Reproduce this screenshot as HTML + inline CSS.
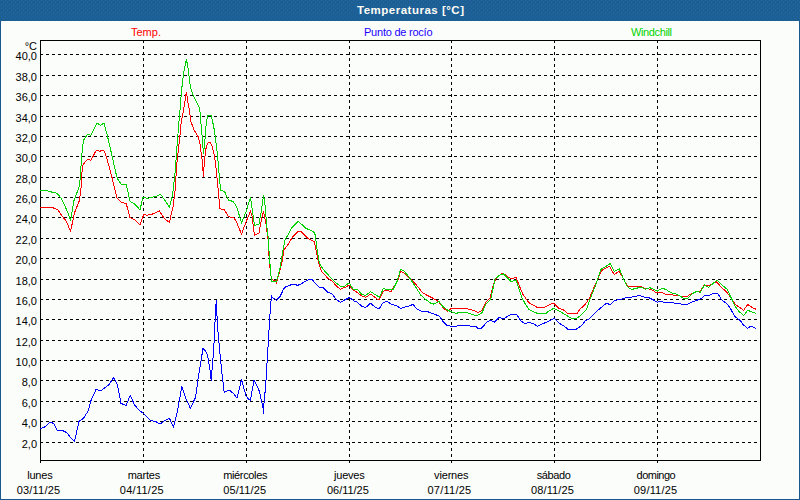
<!DOCTYPE html>
<html><head><meta charset="utf-8">
<style>
html,body{margin:0;padding:0;}
body{width:800px;height:500px;overflow:hidden;position:relative;background:#17598f;font-family:"Liberation Sans",sans-serif;font-size:11px;}
#title{position:absolute;left:0;top:0;width:800px;height:21px;background:#1c6093;}
#tt{position:absolute;left:357px;top:3px;line-height:14px;color:#fffdf5;font-weight:bold;font-size:11.5px;letter-spacing:0.5px;white-space:nowrap;}
#panel{position:absolute;left:1px;top:21px;width:798px;height:478px;background:#fbfdfa;}
svg{position:absolute;left:0;top:0;}
.g{stroke:#000;stroke-width:1;stroke-dasharray:3 3;}
.yl{position:absolute;left:0;width:37px;text-align:right;line-height:14px;color:#000;}
.xl{position:absolute;width:80px;text-align:center;line-height:14px;color:#000;}
.lg{position:absolute;top:25px;line-height:14px;white-space:nowrap;}
</style></head><body>
<div id="title"><svg width="800" height="21" style="position:absolute;left:0;top:0"><defs><pattern id="dith" width="4" height="4" patternUnits="userSpaceOnUse"><rect x="1" y="0" width="1" height="1" fill="#2765b0"/><rect x="3" y="2" width="1" height="1" fill="#2765b0"/></pattern></defs><rect width="800" height="20" fill="url(#dith)"/></svg></div><div id="tt">Temperaturas [°C]</div>
<div id="panel"></div>
<svg width="800" height="500" viewBox="0 0 800 500" shape-rendering="crispEdges">
<line x1="40" y1="54.5" x2="760" y2="54.5" class="g"/>
<line x1="40" y1="75.5" x2="760" y2="75.5" class="g"/>
<line x1="40" y1="95.5" x2="760" y2="95.5" class="g"/>
<line x1="40" y1="116.5" x2="760" y2="116.5" class="g"/>
<line x1="40" y1="136.5" x2="760" y2="136.5" class="g"/>
<line x1="40" y1="156.5" x2="760" y2="156.5" class="g"/>
<line x1="40" y1="177.5" x2="760" y2="177.5" class="g"/>
<line x1="40" y1="197.5" x2="760" y2="197.5" class="g"/>
<line x1="40" y1="217.5" x2="760" y2="217.5" class="g"/>
<line x1="40" y1="238.5" x2="760" y2="238.5" class="g"/>
<line x1="40" y1="258.5" x2="760" y2="258.5" class="g"/>
<line x1="40" y1="279.5" x2="760" y2="279.5" class="g"/>
<line x1="40" y1="299.5" x2="760" y2="299.5" class="g"/>
<line x1="40" y1="319.5" x2="760" y2="319.5" class="g"/>
<line x1="40" y1="340.5" x2="760" y2="340.5" class="g"/>
<line x1="40" y1="360.5" x2="760" y2="360.5" class="g"/>
<line x1="40" y1="380.5" x2="760" y2="380.5" class="g"/>
<line x1="40" y1="401.5" x2="760" y2="401.5" class="g"/>
<line x1="40" y1="421.5" x2="760" y2="421.5" class="g"/>
<line x1="40" y1="442.5" x2="760" y2="442.5" class="g"/>
<line x1="143.5" y1="40" x2="143.5" y2="460" class="g"/>
<line x1="246.5" y1="40" x2="246.5" y2="460" class="g"/>
<line x1="349.5" y1="40" x2="349.5" y2="460" class="g"/>
<line x1="451.5" y1="40" x2="451.5" y2="460" class="g"/>
<line x1="554.5" y1="40" x2="554.5" y2="460" class="g"/>
<line x1="657.5" y1="40" x2="657.5" y2="460" class="g"/>
<rect x="40.5" y="40.5" width="720" height="420" fill="none" stroke="#000" stroke-width="1"/>
<line x1="40.5" y1="460" x2="40.5" y2="463" stroke="#000"/>
<line x1="143.5" y1="460" x2="143.5" y2="463" stroke="#000"/>
<line x1="246.5" y1="460" x2="246.5" y2="463" stroke="#000"/>
<line x1="349.5" y1="460" x2="349.5" y2="463" stroke="#000"/>
<line x1="451.5" y1="460" x2="451.5" y2="463" stroke="#000"/>
<line x1="554.5" y1="460" x2="554.5" y2="463" stroke="#000"/>
<line x1="657.5" y1="460" x2="657.5" y2="463" stroke="#000"/>
<polyline points="40.00,207.25 51.25,207.25 57.50,209.40 61.90,215.60 66.25,221.25 70.60,231.25 74.40,213.10 79.40,200.60 81.25,185.60 82.00,172.00 83.10,164.40 86.90,160.00 88.75,159.40 90.60,160.60 92.50,157.50 96.25,150.25 99.40,151.25 103.75,150.25 106.25,156.25 110.60,172.00 112.50,179.40 116.90,198.10 121.25,202.25 126.25,203.75 130.00,217.50 135.00,220.00 140.00,225.00 143.75,214.40 147.50,215.25 152.50,214.00 159.40,211.00 163.75,217.50 166.25,220.00 169.40,222.25 173.10,206.25 175.60,186.25 176.25,170.00 178.10,151.75 179.75,138.00 181.25,121.75 183.30,112.00 184.80,102.00 186.40,92.10 187.90,102.00 189.70,112.00 190.60,120.50 193.75,129.25 198.10,136.75 200.00,144.25 201.90,158.00 203.50,177.00 204.40,160.50 206.25,146.75 208.10,142.40 210.60,143.00 211.90,145.50 214.40,155.50 216.25,170.00 220.00,208.75 224.40,209.75 228.75,216.90 233.75,217.50 236.00,221.00 241.50,234.00 246.00,222.00 250.50,211.00 252.00,216.00 254.50,235.50 259.00,233.00 261.50,219.00 263.50,211.00 266.00,224.00 268.00,239.00 269.50,264.00 271.00,276.00 272.50,280.00 275.50,280.50 276.50,282.50 279.50,272.00 282.00,262.00 284.00,250.00 285.00,248.60 288.50,243.70 292.70,236.70 298.30,231.10 301.10,231.80 307.40,238.10 314.40,241.60 316.50,252.80 318.60,262.60 321.40,271.00 324.00,274.00 328.00,278.50 332.00,281.00 336.00,285.50 340.50,289.50 343.00,287.80 345.50,287.20 349.00,285.00 353.00,290.00 356.00,291.50 361.60,296.00 365.80,297.20 370.60,294.20 374.80,297.20 379.00,300.20 383.20,291.20 386.80,290.60 391.00,291.50 394.00,286.40 397.60,281.00 400.60,271.40 403.60,272.60 410.80,279.20 416.00,284.40 422.00,292.20 426.80,295.20 432.80,298.20 438.80,301.80 443.60,308.40 447.80,311.40 451.40,308.40 456.80,308.20 466.40,308.40 472.40,310.20 478.20,312.30 481.70,310.50 485.90,302.10 490.10,297.90 492.90,286.00 496.40,277.60 502.70,273.10 506.20,275.50 511.10,279.00 516.00,277.30 518.80,284.60 523.00,294.40 528.60,302.50 534.00,305.60 537.90,307.70 543.70,307.50 548.90,304.90 553.50,303.20 558.70,308.40 563.20,309.70 567.80,313.60 576.90,313.60 580.10,309.00 584.70,305.10 589.20,298.60 595.20,284.90 601.10,271.30 604.30,268.70 609.50,266.10 614.10,274.50 619.30,271.30 623.80,279.70 627.70,286.20 640.70,286.50 644.60,288.50 648.00,288.50 652.00,290.00 657.00,293.00 661.00,292.20 666.00,294.50 673.00,295.00 678.00,295.50 682.50,296.50 687.50,296.20 691.00,293.80 696.00,291.80 700.00,291.50 704.00,285.50 709.20,285.30 716.40,281.70 721.60,287.60 726.10,291.50 731.30,298.00 735.20,304.50 739.10,307.10 743.70,310.30 747.60,304.50 751.50,307.10 756.00,309.30" fill="none" stroke="#ff0000" stroke-width="1"/>
<polyline points="40.00,428.70 44.50,427.20 49.75,422.20 53.50,423.30 57.25,430.20 62.50,430.50 67.00,432.70 70.75,438.00 74.50,441.30 79.00,421.50 83.50,418.20 88.00,411.30 91.00,400.50 96.20,389.20 100.00,391.20 103.00,389.20 109.00,384.70 113.50,377.70 117.20,384.00 121.00,403.50 126.20,405.30 130.25,395.25 134.50,405.00 140.00,411.00 142.90,413.00 150.80,420.80 155.10,421.20 160.20,424.10 164.50,420.50 169.50,418.40 173.40,427.00 176.70,414.80 181.80,386.70 186.10,398.90 190.40,408.30 194.75,398.90 195.60,397.30 198.20,377.90 200.80,362.30 203.00,348.20 206.70,352.50 208.60,361.00 210.60,374.00 211.20,380.50 211.90,371.40 213.20,355.80 214.20,340.20 215.60,308.70 216.40,299.80 217.40,326.00 219.50,347.60 220.30,357.70 222.30,376.60 224.20,392.10 229.40,390.20 234.00,394.00 237.00,398.00 241.50,379.50 246.00,396.00 248.50,399.00 250.50,400.00 254.00,380.00 259.50,391.50 263.00,408.00 263.50,413.50 264.50,393.00 265.50,392.00 266.00,380.00 270.60,304.20 271.60,296.20 273.20,298.20 274.80,298.60 276.40,300.40 280.00,296.60 281.60,293.40 283.60,289.00 285.60,287.00 288.80,285.80 291.60,284.40 295.20,284.40 297.20,285.40 300.00,284.50 304.00,282.00 309.00,279.50 312.50,280.00 316.00,284.00 319.50,287.50 323.50,287.80 327.50,292.00 332.00,294.00 336.00,299.00 340.50,302.50 344.50,300.00 349.50,297.50 354.00,301.00 357.00,301.80 361.60,306.20 365.80,307.40 370.60,303.20 374.80,306.80 379.00,309.20 382.60,303.20 386.80,301.40 391.60,304.20 396.40,305.60 400.60,308.60 403.60,307.40 408.40,306.20 413.20,304.40 416.00,308.20 421.40,311.40 428.00,311.80 433.40,313.80 439.40,316.20 443.00,321.60 447.20,325.80 454.40,326.40 458.60,325.80 466.40,325.80 476.00,326.40 478.20,328.70 481.70,328.00 487.30,321.70 490.80,320.30 494.30,322.40 499.20,317.50 503.40,318.90 511.10,314.30 516.70,314.30 520.90,321.00 525.10,323.80 528.60,322.40 534.00,323.80 537.20,326.20 542.40,324.00 548.90,321.00 554.10,318.40 559.30,323.30 563.90,325.90 567.80,329.20 576.20,329.20 581.40,325.90 585.30,320.70 589.20,318.80 596.50,311.60 602.40,306.40 606.90,303.10 610.20,305.10 614.70,300.50 621.20,299.20 627.10,297.30 633.60,296.90 639.40,295.30 644.60,297.30 648.00,297.20 653.00,299.80 657.50,302.20 660.00,301.50 664.50,302.20 672.00,302.50 675.00,303.20 682.00,304.20 687.00,304.50 692.00,302.00 696.00,300.50 701.00,298.80 704.50,295.50 709.20,295.40 713.10,293.40 717.70,293.40 721.60,299.90 726.80,303.80 730.00,307.70 734.60,316.20 740.40,320.70 743.00,324.60 747.60,328.30 750.80,326.20 756.00,328.50" fill="none" stroke="#0000ff" stroke-width="1"/>
<polyline points="40.00,190.25 46.25,190.60 52.50,192.25 56.90,193.10 60.60,197.50 65.00,206.25 68.10,213.10 70.60,220.60 73.75,201.25 77.50,191.25 79.75,184.40 80.25,176.25 80.60,172.00 82.50,146.25 83.75,140.00 86.90,135.00 88.75,134.40 90.60,135.60 92.50,132.50 96.90,123.10 100.60,125.25 104.00,123.10 107.50,136.25 111.25,152.50 115.60,172.00 117.50,178.75 121.25,184.40 126.25,184.40 130.00,201.25 135.00,204.40 140.00,209.75 143.10,196.90 147.50,198.50 151.25,197.25 156.25,196.50 160.60,194.10 165.00,200.60 169.40,207.25 172.75,193.75 173.75,183.75 175.40,170.00 176.50,151.75 177.50,140.50 178.50,126.75 179.75,113.60 180.80,99.00 182.30,83.50 184.20,69.80 186.40,58.90 188.25,69.80 190.40,87.20 193.20,95.80 199.65,108.20 201.25,126.75 202.50,140.50 203.50,154.25 205.00,139.25 206.25,123.00 207.50,115.75 211.25,115.75 213.75,126.75 215.60,139.25 217.50,155.50 218.75,170.00 220.60,190.60 224.40,191.25 228.75,200.60 233.10,201.25 236.25,206.25 238.00,211.00 241.50,223.00 246.00,212.00 250.50,197.00 252.00,208.00 254.50,225.50 259.00,224.00 261.50,210.00 263.50,195.00 265.00,205.00 267.00,228.00 268.50,240.00 269.00,251.00 270.00,264.00 271.50,282.00 276.00,281.50 277.50,278.00 280.00,268.00 282.00,256.00 283.50,247.00 285.00,240.20 292.00,227.60 298.30,221.30 306.00,228.30 313.70,231.80 315.10,234.60 317.20,250.00 319.30,262.60 322.80,268.90 329.80,276.60 334.00,281.00 338.00,284.50 340.50,286.20 344.50,286.50 349.00,282.80 353.00,289.00 357.50,289.50 361.60,294.20 365.80,295.40 370.60,291.50 375.40,294.80 379.60,297.20 383.20,288.60 386.80,289.40 389.80,289.40 392.80,290.00 397.00,281.60 400.60,269.40 403.60,270.60 408.40,276.20 416.00,287.40 420.80,295.20 425.60,299.40 430.40,303.00 434.00,304.20 438.80,301.40 442.40,306.00 446.60,309.60 449.00,310.80 456.20,313.40 460.40,312.20 466.40,312.60 473.60,315.00 478.20,315.10 481.70,313.30 485.90,304.20 490.80,299.30 495.00,279.00 499.20,275.50 503.40,273.70 507.60,277.90 511.10,281.50 516.00,280.10 521.60,297.20 525.80,304.90 529.30,309.80 534.00,311.90 537.90,313.60 545.70,313.60 548.90,311.00 553.50,308.40 559.30,311.00 565.80,314.90 571.00,318.10 576.20,318.80 581.40,314.90 586.60,309.70 590.00,299.20 595.20,286.20 601.10,269.30 605.60,266.70 610.20,263.50 614.10,271.30 619.30,268.70 623.80,279.70 627.70,286.90 631.60,289.50 636.80,288.20 640.70,287.20 645.30,289.10 650.00,287.80 657.50,291.00 662.00,288.20 666.00,289.50 670.50,292.50 676.00,294.00 680.00,296.00 684.00,298.50 687.50,298.50 692.00,293.80 697.00,291.20 700.00,292.50 704.50,285.00 708.60,287.20 717.00,280.10 722.20,285.30 726.80,288.90 731.30,298.00 735.20,306.40 739.10,311.60 743.70,315.50 747.60,310.30 752.10,311.90 756.00,313.60" fill="none" stroke="#00d200" stroke-width="1"/>
</svg>
<div class="lg" style="left:131px;color:#ff0000">Temp.</div>
<div class="lg" style="left:364px;color:#1a00ff;letter-spacing:-0.23px">Punto de rocío</div>
<div class="lg" style="left:631px;color:#00d200;letter-spacing:-0.37px">Windchill</div>
<div class="yl" style="top:39px">°C</div>
<div class="yl" style="top:49px">40,0</div>
<div class="yl" style="top:70px">38,0</div>
<div class="yl" style="top:90px">36,0</div>
<div class="yl" style="top:111px">34,0</div>
<div class="yl" style="top:131px">32,0</div>
<div class="yl" style="top:151px">30,0</div>
<div class="yl" style="top:172px">28,0</div>
<div class="yl" style="top:192px">26,0</div>
<div class="yl" style="top:212px">24,0</div>
<div class="yl" style="top:233px">22,0</div>
<div class="yl" style="top:253px">20,0</div>
<div class="yl" style="top:274px">18,0</div>
<div class="yl" style="top:294px">16,0</div>
<div class="yl" style="top:314px">14,0</div>
<div class="yl" style="top:335px">12,0</div>
<div class="yl" style="top:355px">10,0</div>
<div class="yl" style="top:375px">8,0</div>
<div class="yl" style="top:396px">6,0</div>
<div class="yl" style="top:416px">4,0</div>
<div class="yl" style="top:437px">2,0</div>
<div class="xl" style="left:-0.20px;top:468px;letter-spacing:-0.2px">lunes</div>
<div class="xl" style="left:-1.50px;top:483px;letter-spacing:0.2px">03/11/25</div>
<div class="xl" style="left:103.86px;top:468px;letter-spacing:-0.2px">martes</div>
<div class="xl" style="left:101.86px;top:483px;letter-spacing:0.26px">04/11/25</div>
<div class="xl" style="left:205.11px;top:468px;letter-spacing:-0.35px">miércoles</div>
<div class="xl" style="left:204.71px;top:483px;letter-spacing:0.14px">05/11/25</div>
<div class="xl" style="left:309.27px;top:468px;letter-spacing:-0.22px">jueves</div>
<div class="xl" style="left:307.87px;top:483px;letter-spacing:-0.03px">06/11/25</div>
<div class="xl" style="left:411.23px;top:468px;letter-spacing:-0.18px">viernes</div>
<div class="xl" style="left:409.43px;top:483px;letter-spacing:0.26px">07/11/25</div>
<div class="xl" style="left:513.59px;top:468px;letter-spacing:-0.38px">sábado</div>
<div class="xl" style="left:512.49px;top:483px;letter-spacing:0.13px">08/11/25</div>
<div class="xl" style="left:615.84px;top:468px;letter-spacing:-0.53px">domingo</div>
<div class="xl" style="left:615.54px;top:483px;letter-spacing:0.19px">09/11/25</div>
</body></html>
